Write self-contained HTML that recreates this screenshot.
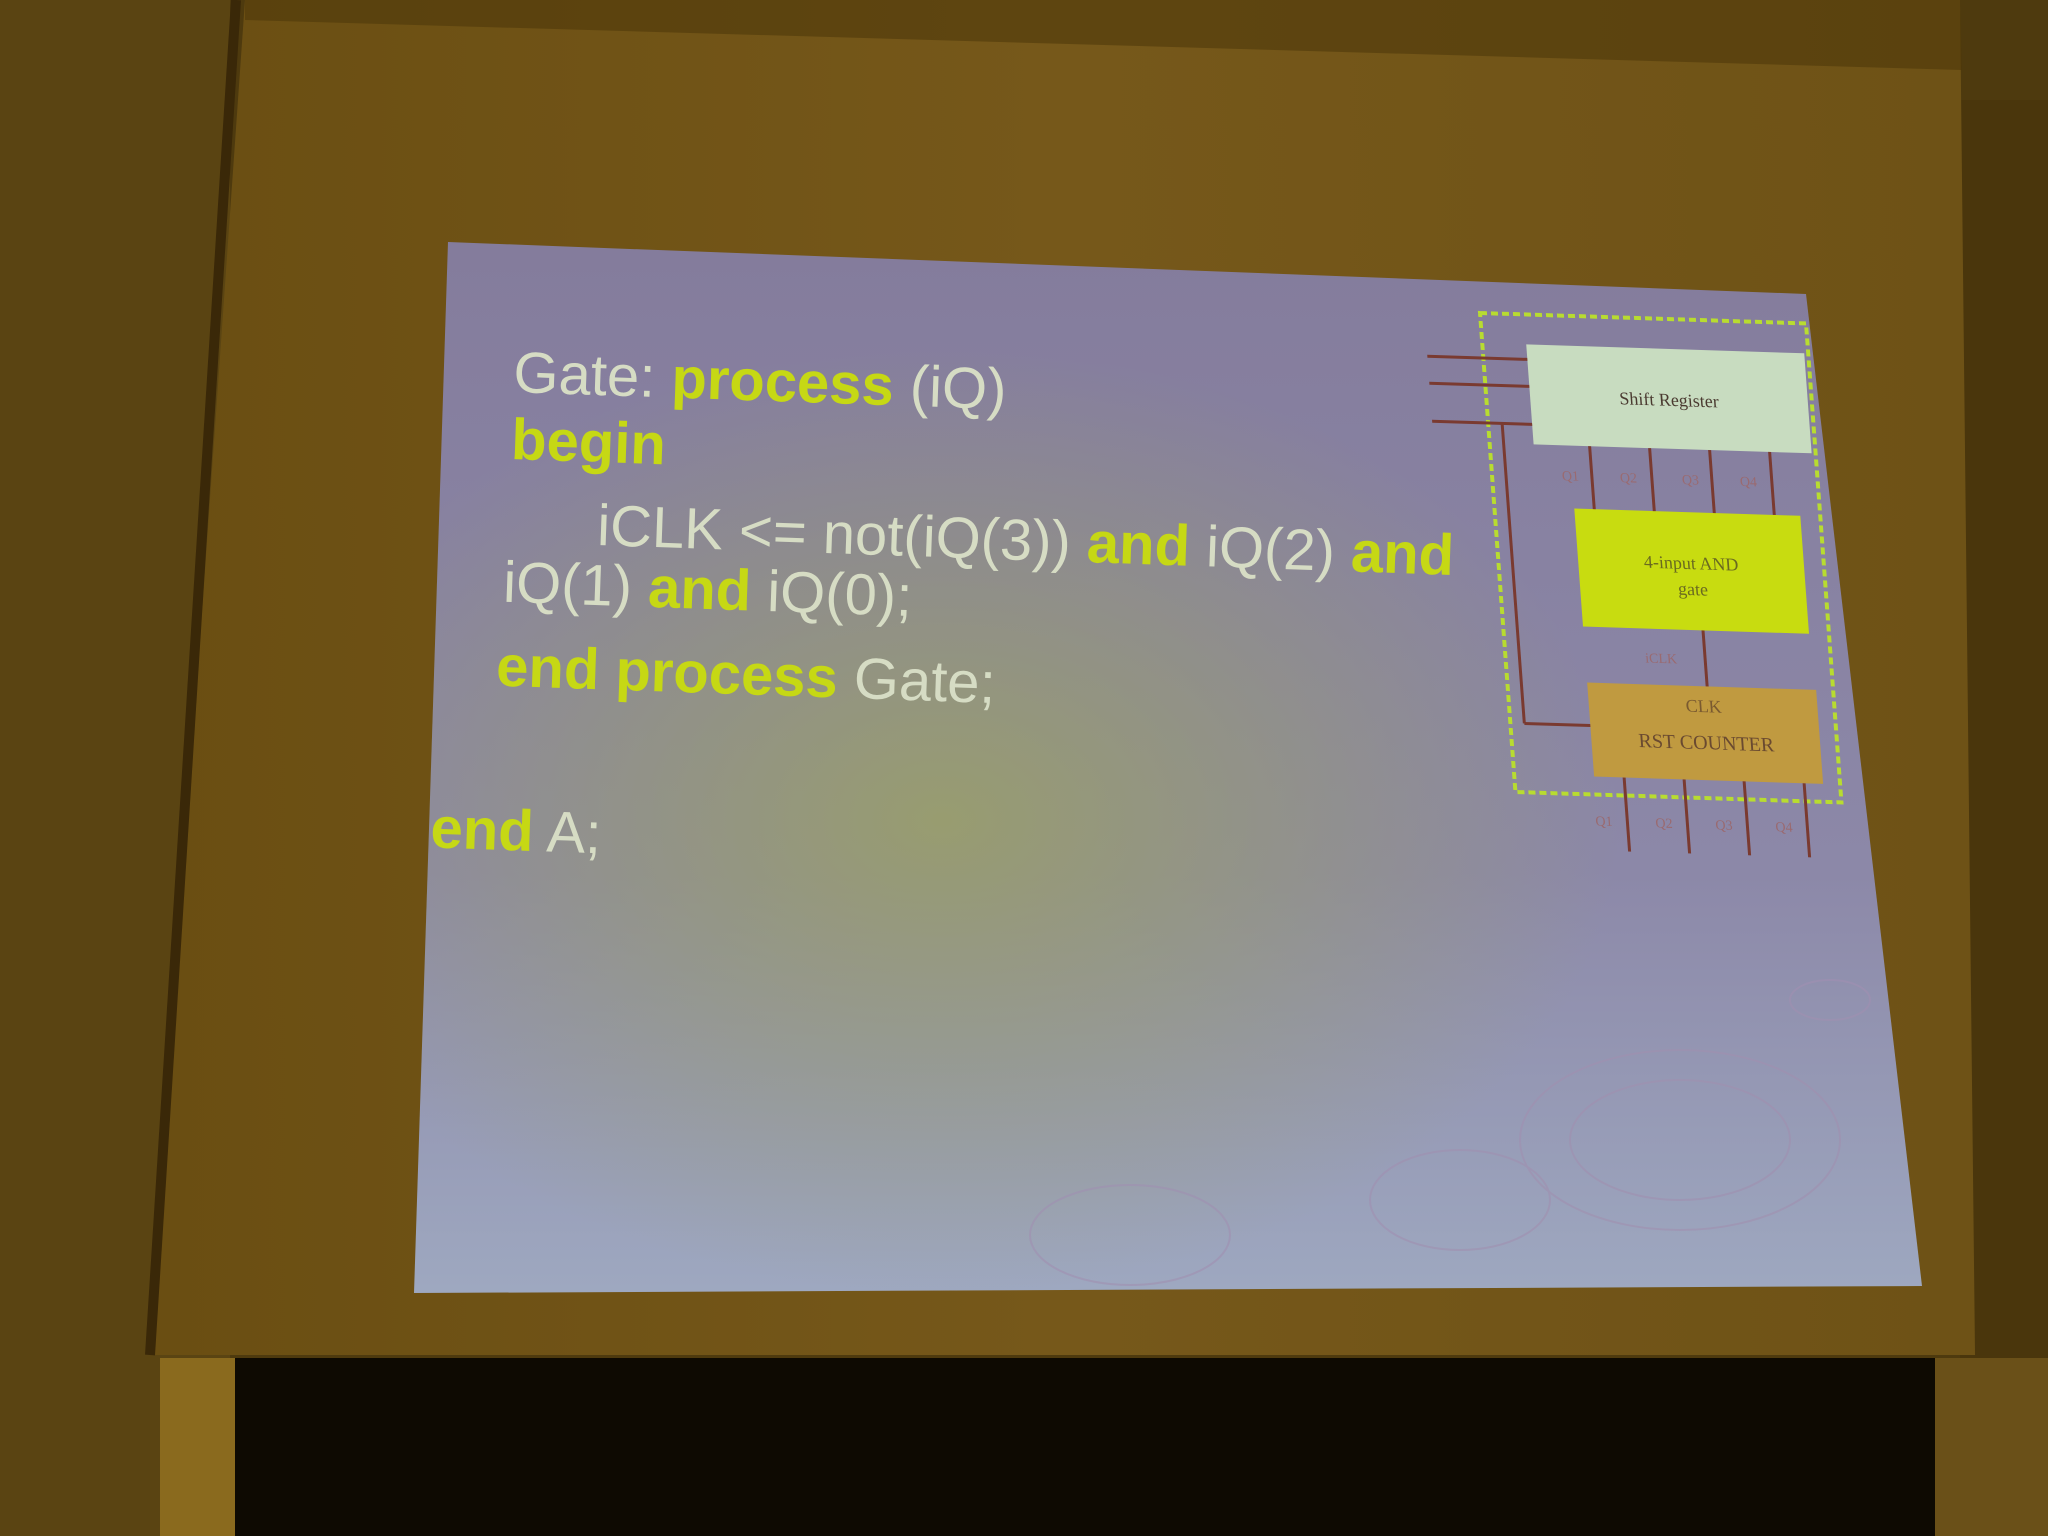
<!DOCTYPE html>
<html><head><meta charset="utf-8"><style>
html,body{margin:0;padding:0;background:#4a3810;}
svg{display:block}
</style></head><body>
<svg width="2048" height="1536" viewBox="0 0 2048 1536" xmlns="http://www.w3.org/2000/svg">
<defs>
<radialGradient id="glow" cx="0.35" cy="0.55" r="0.45">
<stop offset="0" stop-color="#9aa066" stop-opacity="0.85"/>
<stop offset="1" stop-color="#9aa066" stop-opacity="0"/>
</radialGradient>
<linearGradient id="slide" x1="0" y1="0" x2="0" y2="1">
<stop offset="0" stop-color="#847c9c"/>
<stop offset="0.6" stop-color="#8c88a8"/>
<stop offset="1" stop-color="#9ea8c0"/>
</linearGradient>
<linearGradient id="scr" x1="0" y1="0" x2="1" y2="0">
<stop offset="0" stop-color="#6a4e12"/>
<stop offset="0.5" stop-color="#76581a"/>
<stop offset="1" stop-color="#6e5216"/>
</linearGradient>
</defs>
<rect x="0" y="0" width="2048" height="1536" fill="#4e3a0e"/>
<rect x="0" y="0" width="230" height="1536" fill="#5a4412"/>
<rect x="1960" y="100" width="88" height="1436" fill="#4a360c"/>
<polygon points="245,0 1960,0 1975,1355 150,1355" fill="url(#scr)"/>
<polygon points="245,0 1960,0 1962,70 245,20" fill="#4e380a" opacity="0.6"/>
<line x1="236" y1="0" x2="150" y2="1355" stroke="#3a2808" stroke-width="10"/>
<rect x="235" y="1358" width="1700" height="178" fill="#0e0a02"/>
<rect x="160" y="1358" width="75" height="178" fill="#8a6a1e"/>
<rect x="1935" y="1358" width="113" height="178" fill="#6a5018"/>
<polygon points="448,242 1806,294 1922,1286 414,1293" fill="url(#slide)"/>
<polygon points="448,242 1806,294 1922,1286 414,1293" fill="url(#glow)"/>
<g fill="none" stroke="#a090b0" stroke-width="2" opacity="0.6">
<ellipse cx="1680" cy="1140" rx="160" ry="90"/>
<ellipse cx="1680" cy="1140" rx="110" ry="60"/>
<ellipse cx="1460" cy="1200" rx="90" ry="50"/>
<ellipse cx="1130" cy="1235" rx="100" ry="50"/>
<ellipse cx="1830" cy="1000" rx="40" ry="20"/>
</g>
<g font-family="Liberation Sans, sans-serif" font-size="58" fill="#d6dcc4">
<g transform="rotate(2.0 513 390)">
<text x="513" y="392">Gate: <tspan fill="#c6d814" font-weight="bold">process</tspan> (iQ)</text>
<text x="513" y="459" fill="#c6d814" font-weight="bold">begin</text>
<text x="602" y="542">iCLK &lt;= not(iQ(3)) <tspan fill="#c6d814" font-weight="bold">and</tspan> iQ(2) <tspan fill="#c6d814" font-weight="bold">and</tspan></text>
<text x="510" y="602">iQ(1) <tspan fill="#c6d814" font-weight="bold">and</tspan> iQ(0);</text>
<text x="506" y="686"><tspan fill="#c6d814" font-weight="bold">end process</tspan> Gate;</text>
<text x="446" y="850"><tspan fill="#c6d814" font-weight="bold">end</tspan> A;</text>
</g>
</g>
<g transform="translate(1480,313) matrix(1,0.032,0.074,1,0,0)">
<rect x="0" y="0" width="326" height="479" fill="none" stroke="#b8dc30" stroke-width="4" stroke-dasharray="7,4"/>
<rect x="44" y="30" width="278" height="100" fill="#c8dcc0"/>
<text x="183" y="87" font-family="Liberation Serif, serif" font-size="18" fill="#4a3a30" text-anchor="middle">Shift Register</text>
<rect x="80" y="193" width="226" height="118" fill="#c8dc10"/>
<text x="193" y="250" font-family="Liberation Serif, serif" font-size="18" fill="#6a6a20" text-anchor="middle">4-input AND</text>
<text x="193" y="276" font-family="Liberation Serif, serif" font-size="18" fill="#6a6a20" text-anchor="middle">gate</text>
<rect x="80" y="367" width="229" height="94" fill="#c09a40"/>
<text x="195" y="393" font-family="Liberation Serif, serif" font-size="18" fill="#7a5a30" text-anchor="middle">CLK</text>
<text x="195" y="430" font-family="Liberation Serif, serif" font-size="20" fill="#6a4a30" text-anchor="middle">RST COUNTER</text>
<g stroke="#7a3a30" stroke-width="3">
<line x1="100" y1="130" x2="100" y2="193"/><line x1="160" y1="130" x2="160" y2="193"/>
<line x1="220" y1="130" x2="220" y2="193"/><line x1="280" y1="130" x2="280" y2="193"/>
<line x1="200" y1="311" x2="200" y2="367"/>
<line x1="14" y1="110" x2="14" y2="410"/><line x1="14" y1="410" x2="80" y2="410"/>
<line x1="110" y1="461" x2="110" y2="535"/><line x1="170" y1="461" x2="170" y2="535"/>
<line x1="230" y1="461" x2="230" y2="535"/><line x1="290" y1="461" x2="290" y2="535"/>
<line x1="-56" y1="45" x2="44" y2="45"/><line x1="-56" y1="72" x2="44" y2="72"/><line x1="-56" y1="110" x2="44" y2="110"/>
</g>
<g font-family="Liberation Serif, serif" font-size="14" fill="#9a6a70">
<text x="70" y="165">Q1</text><text x="128" y="165">Q2</text><text x="190" y="165">Q3</text><text x="248" y="165">Q4</text>
<text x="140" y="345">iCLK</text>
<text x="78" y="510">Q1</text><text x="138" y="510">Q2</text><text x="198" y="510">Q3</text><text x="258" y="510">Q4</text>
</g>
</g>
</svg>
</body></html>
